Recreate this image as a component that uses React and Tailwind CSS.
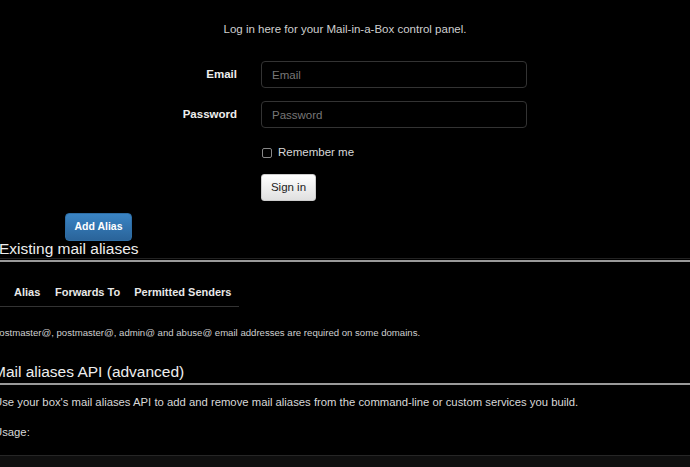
export default function App() {
  return (
    <div className="h-screen w-full overflow-hidden bg-black font-['Liberation_Sans',Arial,sans-serif] text-[11.5px] text-[#dcdcdc]">
      {/* Login */}
      <p className="pt-[21px] text-center leading-4 text-[#cfcfcf]">
        Log in here for your Mail-in-a-Box control panel.
      </p>
      <form className="mt-[24px] flex flex-col gap-[13px]">
        {[
          ['Email', 'Email', 'email'],
          ['Password', 'Password', 'password'],
        ].map(([label, placeholder, type]) => (
          <div key={label} className="flex items-center">
            <label className="w-[237px] text-right font-bold text-[#eee]">{label}</label>
            <input
              type={type}
              placeholder={placeholder}
              className="ml-[24px] h-[27px] w-[266px] rounded-[4px] border border-[#333] bg-black px-[10px] text-[11.5px] text-[#ddd] placeholder:text-[#777] outline-none"
            />
          </div>
        ))}
        <label className="ml-[262px] mt-[4px] flex h-4 items-center gap-[6px] text-[#d8d8d8]">
          <span className="h-[10px] w-[10px] rounded-[2px] border border-[#888] bg-black" />
          Remember me
        </label>
        <button
          type="button"
          className="ml-[261px] h-[27px] w-[55px] rounded-[3px] border border-[#ccc] bg-gradient-to-b from-white to-[#e0e0e0] text-[11.5px] text-[#222]"
        >
          Sign in
        </button>
      </form>

      {/* Aliases */}
      <button
        type="button"
        className="ml-[65px] mt-[12px] h-[28px] w-[67px] rounded-[4px] border border-[#2e6da4] bg-gradient-to-b from-[#3a84c4] to-[#2a649a] text-[10.5px] font-bold text-white"
      >
        Add Alias
      </button>
      <h3 className="-ml-[1px] text-[15.5px] leading-[16px] text-[#eee]">Existing mail aliases</h3>
      <div className="mt-[1px] border-t border-[#222]" />
      <div className="mt-[1px] h-[2px] bg-[#9a9a9a]" />
      <table className="mt-[22px] w-[239px] border-collapse text-[11px] font-bold text-[#e8e8e8]">
        <thead>
          <tr className="border-b border-[#333]">
            <th className="pb-[5px] pl-[14px] pr-[7px] text-left">Alias</th>
            <th className="pb-[5px] px-[7px] text-left">Forwards To</th>
            <th className="pb-[5px] px-[6px] text-left">Permitted Senders</th>
          </tr>
        </thead>
      </table>
      <p className="-ml-[6px] mt-[19px] text-[9.6px] text-[#cfcfcf]">
        postmaster@, postmaster@, admin@ and abuse@ email addresses are required on some domains.
      </p>

      <h3 className="-ml-[7px] mt-[24px] text-[15.5px] leading-[16px] text-[#eee]">Mail aliases API (advanced)</h3>
      <div className="mt-[3px] h-[2px] bg-[#9a9a9a]" />
      <p className="-ml-[6px] mt-[9px] text-[11.3px] leading-4 text-[#d8d8d8]">
        Use your box's mail aliases API to add and remove mail aliases from the command-line or custom services you build.
      </p>
      <p className="-ml-[6px] mt-[14px] text-[11.3px] leading-4 text-[#d8d8d8]">Usage:</p>
      <pre className="mt-[15px] h-[40px] border-t border-[#262626] bg-[#0f0f0f]" />
    </div>
  );
}
